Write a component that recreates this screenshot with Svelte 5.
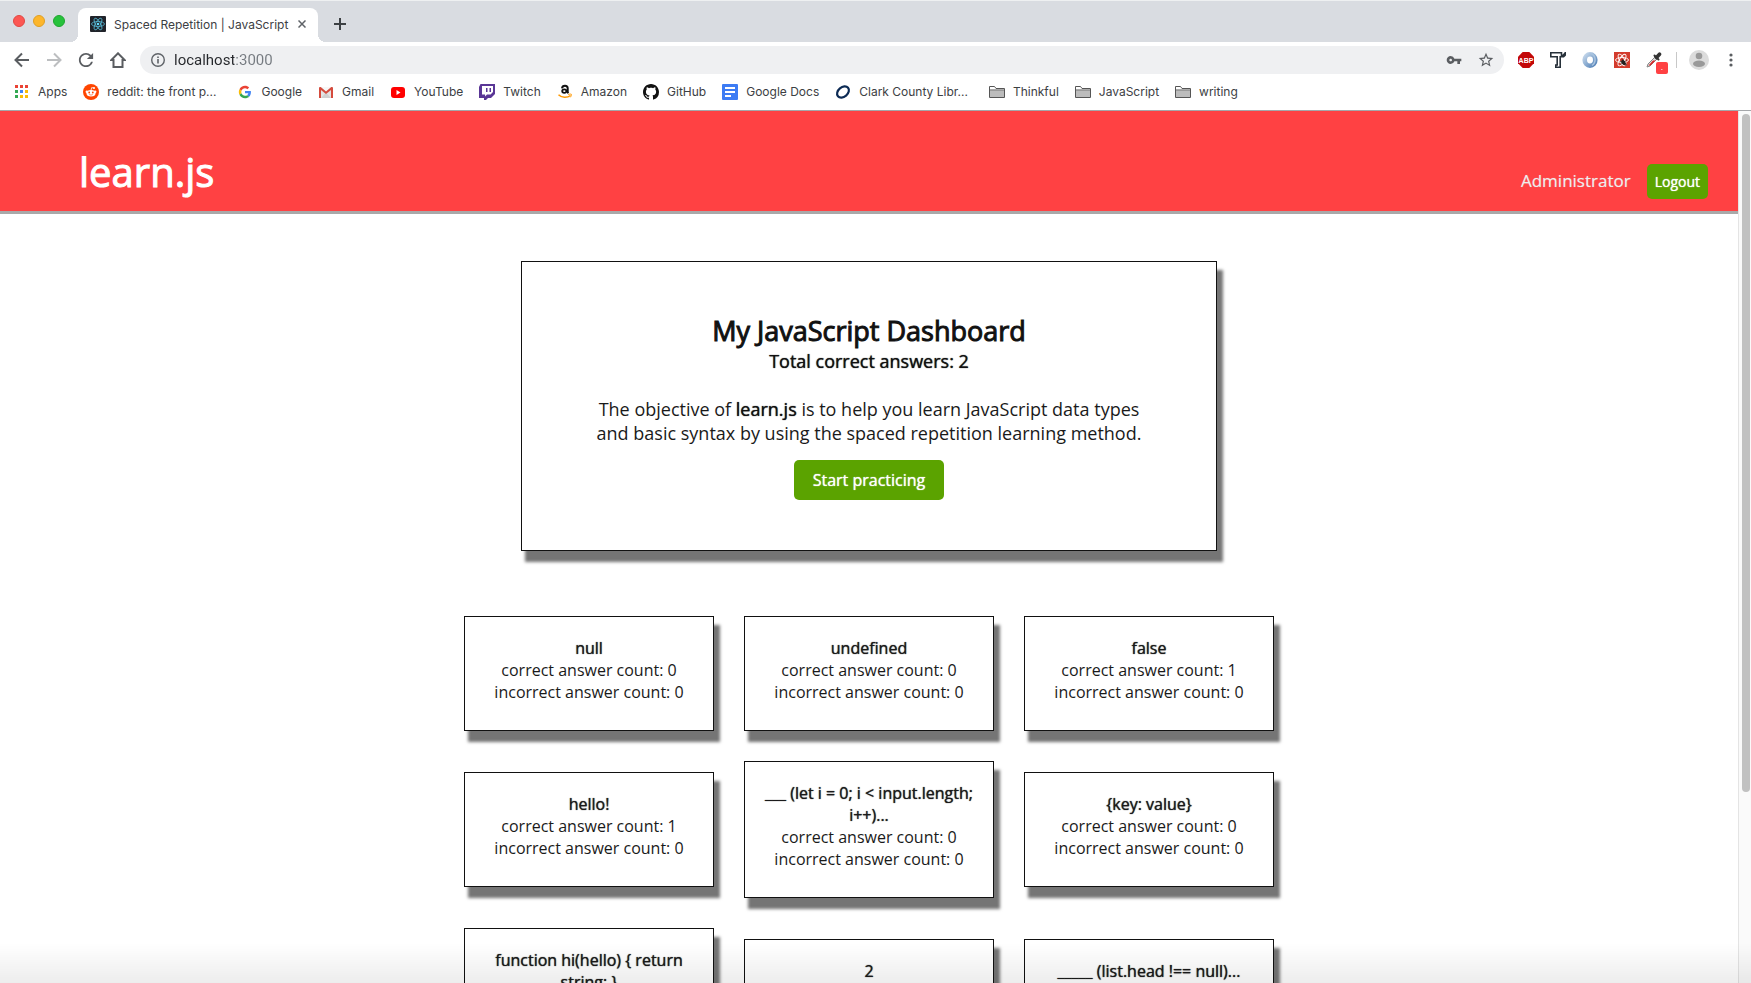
<script>
  const words = [
    { name: 'null', correct: 0, incorrect: 0 },
    { name: 'undefined', correct: 0, incorrect: 0 },
    { name: 'false', correct: 1, incorrect: 0 },
    { name: 'hello!', correct: 1, incorrect: 0 },
    { name: '___ (let i = 0; i < input.length; i++)...', correct: 0, incorrect: 0 },
    { name: '{key: value}', correct: 0, incorrect: 0 },
    { name: 'function hi(hello) { return string; }', correct: 0, incorrect: 0 },
    { name: '2', correct: 0, incorrect: 0 },
    { name: '_____ (list.head !== null)...', correct: 0, incorrect: 0 }
  ];

  const bookmarks = [
    { icon: 'apps', label: 'Apps' },
    { icon: 'reddit', label: 'reddit: the front p...', clipped: true },
    { icon: 'google', label: 'Google' },
    { icon: 'gmail', label: 'Gmail' },
    { icon: 'youtube', label: 'YouTube' },
    { icon: 'twitch', label: 'Twitch' },
    { icon: 'amazon', label: 'Amazon' },
    { icon: 'github', label: 'GitHub' },
    { icon: 'docs', label: 'Google Docs' },
    { icon: 'library', label: 'Clark County Libr...', clipped: true },
    { icon: 'folder', label: 'Thinkful' },
    { icon: 'folder', label: 'JavaScript' },
    { icon: 'folder', label: 'writing' }
  ];

  const appColors = ['#ea4335', '#ea4335', '#ea4335', '#34a853', '#4285f4', '#fbbc05', '#34a853', '#fbbc05', '#fbbc05'];
  let address = $state('localhost:3000');
</script>

{#snippet glyph(name)}
  {#if name === 'apps'}
    <svg viewBox="0 0 16 16" aria-hidden="true">
      {#each appColors as color, i}
        <rect x={1 + (i % 3) * 5} y={1 + Math.floor(i / 3) * 5} width="3" height="3" fill={color} />
      {/each}
    </svg>
  {:else if name === 'reddit'}
    <svg viewBox="0 0 16 16" aria-hidden="true">
      <circle cx="8" cy="8" r="8" fill="#ff4500" />
      <path d="M8 6.200 8.700 3.600 10.800 4" stroke="#fff" stroke-width=".8" fill="none" />
      <circle cx="11" cy="4" r="1" fill="#fff" />
      <circle cx="3.800" cy="7.800" r="1.200" fill="#fff" /><circle cx="12.200" cy="7.800" r="1.200" fill="#fff" />
      <ellipse cx="8" cy="9.200" rx="4.500" ry="3.300" fill="#fff" />
      <circle cx="6.200" cy="8.500" r=".9" fill="#ff4500" /><circle cx="9.800" cy="8.500" r=".9" fill="#ff4500" />
      <path d="M6.200 10.500q1.800 1.200 3.600 0" stroke="#ff4500" stroke-width=".6" fill="none" />
    </svg>
  {:else if name === 'google'}
    <svg viewBox="-7 -7 62 62" aria-hidden="true">
      <path fill="#EA4335" d="M24 9.500c3.540 0 6.710 1.220 9.210 3.600l6.850-6.850C35.900 2.380 30.470 0 24 0 14.620 0 6.510 5.380 2.560 13.220l7.980 6.190C12.430 13.720 17.740 9.500 24 9.500z" />
      <path fill="#4285F4" d="M46.980 24.550c0-1.570-.15-3.090-.38-4.550H24v9.020h12.940c-.58 2.960-2.260 5.480-4.780 7.180l7.730 6c4.510-4.180 7.090-10.360 7.090-17.650z" />
      <path fill="#FBBC05" d="M10.530 28.590c-.48-1.450-.76-2.990-.76-4.590s.27-3.140.76-4.590l-7.980-6.190C.92 16.460 0 20.120 0 24c0 3.880.92 7.540 2.560 10.780l7.970-6.190z" />
      <path fill="#34A853" d="M24 48c6.480 0 11.930-2.130 15.890-5.810l-7.730-6c-2.150 1.450-4.920 2.300-8.160 2.300-6.260 0-11.570-4.220-13.470-9.910l-7.980 6.190C6.510 42.620 14.620 48 24 48z" />
    </svg>
  {:else if name === 'gmail'}
    <svg viewBox="0 0 16 16" aria-hidden="true">
      <rect x="1" y="3" width="14" height="11" rx="1" fill="#e4e4e4" />
      <path d="M3 14 8 8.500 13 14z" fill="#d0d0d0" /><path d="M2.500 3h11L8 7.500z" fill="#f7f7f7" />
      <path d="M1 14V4.200C1 3 2.300 2.700 3 3.300L8 7.500l5-4.200c.7-.6 2-.3 2 .9V14h-2V6L8 10 3 6v8z" fill="#d54b3d" />
    </svg>
  {:else if name === 'youtube'}
    <svg viewBox="0 0 16 16" aria-hidden="true">
      <rect x="1" y="3" width="14" height="11" rx="3" fill="#f00" /><path d="M6.500 6v5l4-2.500z" fill="#fff" />
    </svg>
  {:else if name === 'twitch'}
    <svg viewBox="0 0 16 16" aria-hidden="true">
      <path fill="#5a3696" fill-rule="evenodd" d="M1.500 0H16v10l-4 4H9l-2 2H5v-2H0V3zM3 2v8.500h3v2l2-2h3.500L14 8V2zM7 4h1.500v4H7zm3.500 0H12v4h-1.500z" />
    </svg>
  {:else if name === 'amazon'}
    <svg viewBox="0 0 16 16" aria-hidden="true">
      <path d="M5 4.300C5.200 2.500 6.300 1.700 8 1.700c1.900 0 2.700 1 2.700 2.600v3.200c0 .8.200 1.200.7 1.700" fill="none" stroke="#111" stroke-width="2" />
      <ellipse cx="7.300" cy="7.100" rx="2.100" ry="1.800" fill="none" stroke="#111" stroke-width="1.800" />
      <path d="M1.500 10.700c3.500 3.300 8.500 3.500 12 .8" fill="none" stroke="#f90" stroke-width="1.500" />
      <path d="M11.200 10.500c1.500-.6 3-.5 3.200-.2s-.2 1.900-1.100 3" fill="none" stroke="#f90" />
    </svg>
  {:else if name === 'github'}
    <svg viewBox="0 0 16 16" aria-hidden="true">
      <path fill="#111" d="M8 0C3.580 0 0 3.580 0 8c0 3.540 2.290 6.530 5.470 7.590.4.070.55-.17.55-.38 0-.19-.01-.82-.01-1.490-2.010.37-2.530-.49-2.690-.94-.09-.23-.48-.94-.82-1.130-.28-.15-.68-.52-.01-.53.63-.01 1.080.58 1.230.82.72 1.210 1.870.87 2.330.66.07-.52.28-.87.51-1.070-1.780-.2-3.640-.89-3.640-3.950 0-.87.31-1.590.82-2.150-.08-.2-.36-1.020.08-2.120 0 0 .67-.21 2.200.82.64-.18 1.320-.27 2-.27s1.360.09 2 .27c1.530-1.040 2.200-.82 2.200-.82.44 1.100.16 1.920.08 2.120.51.56.82 1.270.82 2.150 0 3.070-1.870 3.750-3.650 3.950.29.25.54.73.54 1.480 0 1.070-.01 1.930-.01 2.200 0 .21.15.46.55.38A8.010 8.010 0 0 0 16 8c0-4.420-3.580-8-8-8z" />
    </svg>
  {:else if name === 'docs'}
    <svg viewBox="0 0 16 16" aria-hidden="true">
      <rect width="16" height="16" rx="1" fill="#3d7cf4" />
      <path d="M3 4h10M3 8h10M3 12h6" stroke="#fff" stroke-width="2" />
    </svg>
  {:else if name === 'library'}
    <svg viewBox="0 0 16 16" aria-hidden="true">
      <ellipse cx="8" cy="8" rx="6.600" ry="4.800" transform="rotate(-40 8 8)" fill="none" stroke="#0c2a54" stroke-width="2.200" />
    </svg>
  {:else if name === 'folder'}
    <svg viewBox="0 0 16 16" aria-hidden="true">
      <path d="M.5 13.500v-11h5l1.500 2h8.500v9z" fill="#fff" stroke="#555" />
      <path d="M1 6.500h14V13H1z" fill="#bcbcbc" /><path d="M1 6h14" stroke="#555" />
    </svg>
  {/if}
{/snippet}

<div class="window">
  <div class="tabs">
    <div class="lights">
      <button class="light red" aria-label="Close window"></button>
      <button class="light amber" aria-label="Minimize"></button>
      <button class="light green" aria-label="Zoom"></button>
    </div>
    <div class="tab">
      <svg class="icon" viewBox="0 0 16 16" aria-hidden="true">
        <rect width="16" height="16" rx="1" fill="#20232a" />
        <g fill="none" stroke="#55b8d4" stroke-width=".8">
          <ellipse cx="8" cy="8" rx="6.500" ry="2.500" />
          <ellipse cx="8" cy="8" rx="6.500" ry="2.500" transform="rotate(60 8 8)" />
          <ellipse cx="8" cy="8" rx="6.500" ry="2.500" transform="rotate(120 8 8)" />
        </g>
        <circle cx="8" cy="8" r="1.300" fill="#61dafb" />
      </svg>
      <span class="tab-title">Spaced Repetition | JavaScript</span>
      <button class="close" aria-label="Close tab">
        <svg viewBox="0 0 8 8"><path d="M.5.5l7 7m0-7-7 7" stroke="#5f6368" stroke-width="1.500" /></svg>
      </button>
    </div>
    <button class="new-tab" aria-label="New tab">
      <svg viewBox="0 0 12 12"><path d="M6 0v12M0 6h12" stroke="#3c4043" stroke-width="2" /></svg>
    </button>
  </div>

  <div class="toolbar">
    <button class="tool" aria-label="Back">
      <svg viewBox="0 0 16 16"><path d="M15 8H2M8 1.500 1.500 8 8 14.500" fill="none" stroke="#5a5d61" stroke-width="2" /></svg>
    </button>
    <button class="tool" aria-label="Forward">
      <svg viewBox="0 0 16 16"><path d="M1 8h13M8 1.500 14.500 8 8 14.500" fill="none" stroke="#bcbec0" stroke-width="2" /></svg>
    </button>
    <button class="tool" aria-label="Reload">
      <svg viewBox="3 3 18 18"><path fill="#5a5d61" d="M17.650 6.350A7.958 7.958 0 0 0 12 4c-4.420 0-7.990 3.580-7.990 8s3.570 8 7.990 8c3.730 0 6.840-2.550 7.730-6h-2.080A5.990 5.990 0 0 1 12 18c-3.310 0-6-2.690-6-6s2.690-6 6-6c1.660 0 3.140.69 4.220 1.780L13 11h7V4l-2.350 2.350z" /></svg>
    </button>
    <button class="tool" aria-label="Home">
      <svg viewBox="0 0 16 16"><path d="M3.500 8v7h9V8h2.200L8 1.300 1.300 8z" fill="none" stroke="#5a5d61" stroke-width="2" /></svg>
    </button>

    <div class="omnibox">
      <svg class="info" viewBox="0 0 14 14" aria-hidden="true">
        <circle cx="7" cy="7" r="6.300" fill="none" stroke="#5f6368" stroke-width="1.400" />
        <path d="M7 6v4.500M7 3.500V5" stroke="#5f6368" stroke-width="1.600" />
      </svg>
      <input class="address" type="text" aria-label="Address" bind:value={address} />
      <button class="tool" aria-label="Saved passwords">
        <svg viewBox="0 0 24 24"><path fill="#5a5d61" d="M12.650 10A5.990 5.990 0 0 0 7 6c-3.310 0-6 2.690-6 6s2.690 6 6 6a5.990 5.990 0 0 0 5.650-4H17v4h4v-4h2v-4H12.650zM7 14c-1.100 0-2-.9-2-2s.9-2 2-2 2 .9 2 2-.9 2-2 2z" /></svg>
      </button>
      <button class="tool" aria-label="Bookmark this page">
        <svg viewBox="1 1 22 22"><path fill="#5a5d61" d="M22 9.240l-7.190-.62L12 2 9.190 8.630 2 9.240l5.460 4.730L5.820 21 12 17.270 18.180 21l-1.630-7.030L22 9.240zM12 15.400l-3.760 2.270 1-4.280-3.320-2.880 4.380-.38L12 6.100l1.710 4.040 4.380.38-3.320 2.880 1 4.280L12 15.400z" /></svg>
      </button>
    </div>

    <button class="tool" aria-label="Adblock Plus">
      <svg viewBox="0 0 16 16">
        <path d="M4.700 0h6.600L16 4.700v6.600L11.300 16H4.700L0 11.300V4.700z" fill="#c30808" />
        <text x="8" y="11" text-anchor="middle" class="abp">ABP</text>
      </svg>
    </button>
    <button class="tool" aria-label="Text tool">
      <svg viewBox="0 0 16 16"><path d="M.8 4.800V.8h10.700v2.400h1.700L15.200.8v2.400l-1.600 1.600H10.200v10.400H5.800V13h1.400V4.800z" fill="#fff" stroke="#27313a" stroke-width="1.600" /></svg>
    </button>
    <button class="tool" aria-label="Ring extension">
      <svg viewBox="0 0 16 16">
        <defs><linearGradient id="ring" x1="0" y1="0" x2="1" y2="1"><stop offset="0" stop-color="#c3d6ea" /><stop offset="1" stop-color="#5684b9" /></linearGradient></defs>
        <ellipse cx="8" cy="8" rx="5.300" ry="5.700" fill="none" stroke="url(#ring)" stroke-width="4.600" />
        <path d="M9 1.500c5 2 5.500 9 1 12" fill="none" stroke="#a9c4df" stroke-width="1.500" />
      </svg>
    </button>
    <button class="tool" aria-label="React developer tools">
      <svg viewBox="0 0 16 16">
        <rect width="16" height="16" fill="#d33b2c" />
        <g fill="none" stroke="#fff" stroke-width=".9">
          <ellipse cx="8" cy="8" rx="6.500" ry="2.500" />
          <ellipse cx="8" cy="8" rx="6.500" ry="2.500" transform="rotate(60 8 8)" />
          <ellipse cx="8" cy="8" rx="6.500" ry="2.500" transform="rotate(120 8 8)" />
        </g>
        <ellipse cx="9.500" cy="10.500" rx="1.800" ry="2.800" fill="#222" transform="rotate(-40 9.500 10.500)" />
        <path d="M6 9.500l7 3M8 7l4 7M6.500 12.500l6-4" stroke="#222" stroke-width=".7" />
      </svg>
    </button>
    <button class="tool" aria-label="Color picker">
      <svg viewBox="0 0 16 16">
        <path d="M1 15l1-3 7-7 2 2-7 7z" fill="#ddd" stroke="#888" />
        <path d="M2.500 13.500 7 8.500h2.500l-5 5z" fill="#d92525" />
        <path d="M8.500 3.500l4 4" stroke="#333" stroke-width="2" stroke-linecap="round" />
        <path d="M10.500 5.500l3-3.300" stroke="#333" stroke-width="3.600" stroke-linecap="round" />
      </svg>
      <span class="badge">.</span>
    </button>
    <span class="divider"></span>
    <button class="tool avatar" aria-label="Profile">
      <svg viewBox="0 0 20 20"><circle cx="10" cy="10" r="10" fill="#dcdcdc" /><circle cx="10" cy="6" r="3.300" fill="#999" /><ellipse cx="10" cy="13.800" rx="6" ry="3.200" fill="#999" /></svg>
    </button>
    <button class="tool" aria-label="Menu">
      <svg viewBox="0 0 16 16" fill="#5a5d61"><circle cx="8" cy="3" r="1.600" /><circle cx="8" cy="8" r="1.600" /><circle cx="8" cy="13" r="1.600" /></svg>
    </button>
  </div>

  <nav class="bookmarks" aria-label="Bookmarks">
    {#each bookmarks as mark}
      <a href="#top" class:clipped={mark.clipped}>{@render glyph(mark.icon)}<span>{mark.label}</span></a>
    {/each}
  </nav>

  <div class="viewport">
    <div class="page">
      <header>
        <h1>learn.js</h1>
        <div class="account">
          <span class="user">Administrator</span>
          <button class="logout">Logout</button>
        </div>
      </header>
      <main>
        <section class="hero">
          <h2>My JavaScript Dashboard</h2>
          <h3>Total correct answers: 2</h3>
          <p>The objective of <b>learn.js</b> is to help you learn JavaScript data types and basic syntax by using the spaced repetition learning method.</p>
          <button class="start">Start practicing</button>
        </section>
        <ul class="words">
          {#each words as word}
            <li>
              <h4>{word.name}</h4>
              <p>correct answer count: {word.correct}</p>
              <p>incorrect answer count: {word.incorrect}</p>
            </li>
          {/each}
        </ul>
      </main>
    </div>
    <div class="scrollbar"><div class="thumb"></div></div>
  </div>
  <div class="shade"></div>
</div>

<style>
  :global(body) { margin: 0; overflow: hidden; }
  * { box-sizing: border-box; }
  button { border: 0; padding: 0; background: none; font: inherit; }
  h1, h2, h3, h4, p, ul { margin: 0; padding: 0; }
  svg { display: block; flex: none; }

  .window {
    display: flex;
    flex-direction: column;
    height: 100vh;
    overflow: hidden;
    background: #fff;
    font-family: Inter, "Open Sans", sans-serif;
    font-size: 12px;
    color: #3c4043;
  }

  .tabs {
    display: flex;
    align-items: center;
    height: 42px;
    flex: none;
    padding: 0 0 2px 13px;
    background: #d9dce1;
    border-top: 1px solid #eef0f1;
  }
  .lights { display: flex; gap: 8px; width: 65px; }
  .light { width: 12px; height: 12px; border-radius: 50%; }
  .red { background: #fc5753; border: 1px solid #e04843; }
  .amber { background: #fdb62b; border: 1px solid #df9f24; }
  .green { background: #27c23c; border: 1px solid #1fa62f; }
  .tab {
    position: relative;
    display: flex;
    align-items: center;
    align-self: flex-end;
    width: 240px;
    height: 34px;
    margin-bottom: -2px;
    padding: 0 12px 2px;
    background: #fff;
    border-radius: 8px 8px 0 0;
  }
  .tab::before, .tab::after {
    content: "";
    position: absolute;
    bottom: 0;
    width: 8px;
    height: 8px;
  }
  .tab::before { left: -8px; background: radial-gradient(circle at 0 0, transparent 8px, #fff 8px); }
  .tab::after { right: -8px; background: radial-gradient(circle at 100% 0, transparent 8px, #fff 8px); }
  .icon { width: 16px; height: 16px; }
  .tab-title { flex: 1; margin-left: 8px; overflow: hidden; white-space: nowrap; }
  .close { width: 8px; margin-left: 8px; }
  .new-tab { width: 12px; margin: 6px 0 0 16px; }

  .toolbar {
    display: flex;
    align-items: center;
    flex: none;
    height: 36px;
    padding: 0 4px 0 6px;
  }
  .tool { position: relative; display: grid; place-items: center; flex: none; width: 32px; height: 28px; }
  .tool svg { width: 16px; height: 16px; }
  .avatar { margin-left: 6px; }
  .avatar svg { width: 20px; height: 20px; }
  .abp { font: bold 7px "Liberation Sans", sans-serif; fill: #fff; }
  .badge {
    position: absolute;
    left: 18px;
    top: 16px;
    width: 12px;
    height: 12px;
    border-radius: 2px;
    background: #ff4143;
    color: #fff;
    font-size: 8px;
    line-height: 10px;
  }
  .divider { width: 1px; height: 16px; margin-left: 6px; background: #c8c8c8; }
  .omnibox {
    display: flex;
    align-items: center;
    flex: 1;
    height: 28px;
    margin: 0 6px;
    padding: 0 2px 0 11px;
    border-radius: 14px;
    background: #eff0f2;
  }
  .info { width: 14px; height: 14px; }
  .address {
    flex: 1;
    min-width: 0;
    height: 28px;
    margin-left: 9px;
    padding: 0;
    border: 0;
    outline: 0;
    font: 15px Roboto, sans-serif;
    background: linear-gradient(90deg, #26282c 60px, #757a80 60px);
    background-clip: text;
    -webkit-background-clip: text;
    color: transparent;
  }

  .bookmarks {
    display: flex;
    align-items: center;
    gap: 16px;
    flex: none;
    height: 33px;
    padding: 0 14px 5px;
    border-bottom: 1px solid #a5a7aa;
  }
  .bookmarks a {
    display: flex;
    align-items: center;
    gap: 8px;
    color: inherit;
    text-decoration: none;
    white-space: nowrap;
  }
  .bookmarks .clipped { padding-right: 5px; }
  .bookmarks svg { width: 16px; height: 16px; }

  .viewport {
    display: flex;
    flex: 1;
    min-height: 0;
    font-family: "Open Sans", sans-serif;
    color: #1a1a1a;
  }
  .page { flex: 1; min-width: 0; overflow: hidden; }
  .scrollbar { width: 13px; padding: 3px 1px 0 3px; background: #fafafa; border-left: 1px solid #e4e4e4; }
  .thumb { height: 78%; border-radius: 4px; background: #c1c1c1; }

  h1, h2, h3, h4, b, .logout, .start {
    font-weight: 400;
    text-shadow: 0 0 1px currentColor;
  }
  h1, h2 { text-shadow: none; -webkit-text-stroke: 1px currentColor; }

  header {
    display: flex;
    justify-content: space-between;
    align-items: baseline;
    padding: 30px 30px 9px 79px;
    background: #ff4143;
    border-bottom: 3px solid #a9a9a9;
    color: #fff;
  }
  h1 { font-size: 40px; line-height: 61px; }
  .account { display: flex; align-items: baseline; gap: 16px; }
  .user { font-size: 17px; line-height: 24px; color: #eee; text-shadow: 0 0 1px rgb(238 238 238 / 50%); }
  .logout {
    height: 35px;
    padding: 0 8px;
    border-radius: 5px;
    background: #5ba300;
    color: #fff;
    font-size: 14px;
  }

  main {
    display: flex;
    flex-direction: column;
    align-items: center;
    gap: 65px;
    padding-top: 47px;
    text-align: center;
  }
  .hero, .words li {
    border: 1px solid #111;
    background: #fff;
    box-shadow: 5px 10px 3px 1px #757575;
  }
  .hero { width: 40%; padding: 51px 70px 50px; font-size: 18px; line-height: 24px; }
  .hero h2 { font-size: 27px; line-height: 36px; color: #111; }
  .hero h3 { font-size: 18px; line-height: 24px; color: #111; }
  .hero p { margin: 24px 0 15px; }
  .hero b { color: #111; }
  .start {
    height: 40px;
    padding: 0 19px;
    border-radius: 5px;
    background: #5ba300;
    color: #fff;
    font-size: 16px;
  }

  .words {
    display: grid;
    grid-template-columns: repeat(3, 250px);
    gap: 30px;
    align-items: center;
    list-style: none;
    font-size: 16px;
    line-height: 22px;
  }
  .words li { padding: 20px 20px 27px; }
  .words h4 { font-size: 16px; line-height: 22px; }

  .shade {
    position: fixed;
    inset: auto 0 0;
    height: 40px;
    background: linear-gradient(transparent, rgb(0 0 0 / 7%));
    pointer-events: none;
  }
</style>
